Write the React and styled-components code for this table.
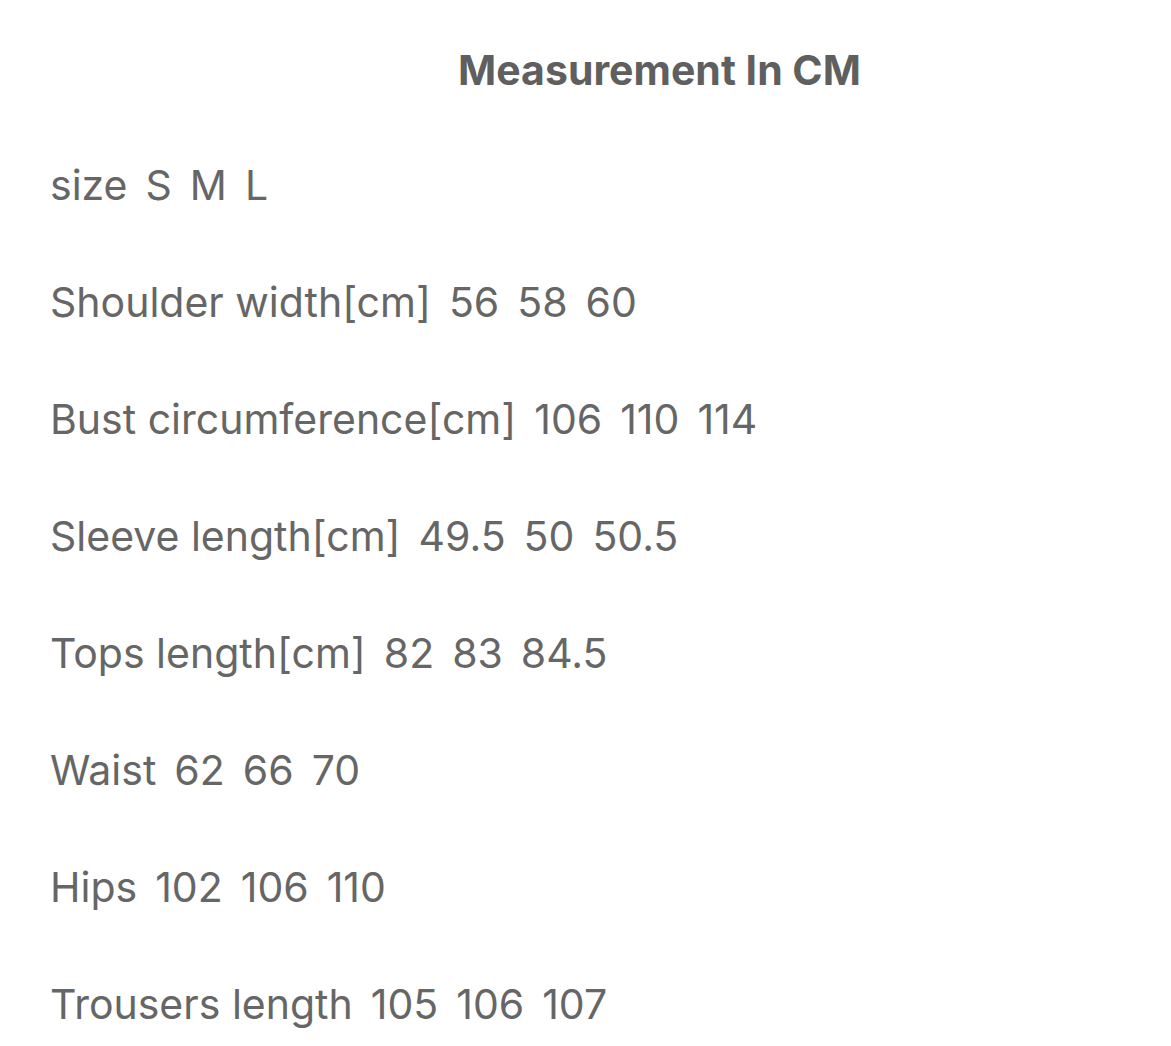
import React from 'react';
import styled, { createGlobalStyle } from 'styled-components';

const Global = createGlobalStyle`
  body {
    margin: 0;
    background: #ffffff;
    font-family: Inter, "Open Sans", sans-serif;
  }
`;

const Page = styled.div`
  display: flex;
  flex-direction: column;
  padding: 40px 0 0 50px;
  width: 1171px;
  height: 1046px;
  box-sizing: border-box;
  overflow: hidden;
`;

const Title = styled.h1`
  flex-shrink: 0;
  margin: 0 0 26px 0;
  padding-left: 98px;
  text-align: center;
  font-size: 41px;
  line-height: 60px;
  font-weight: 700;
  color: #5f5f5f;
`;

const Row = styled.div`
  flex-shrink: 0;
  display: flex;
  align-items: center;
  gap: 18px;
  height: 117px;
  font-size: 41px;
  color: #666666;
`;

const Cell = styled.span`
  white-space: nowrap;
`;

const rows = [
  ['size', 'S', 'M', 'L'],
  ['Shoulder width[cm]', '56', '58', '60'],
  ['Bust circumference[cm]', '106', '110', '114'],
  ['Sleeve length[cm]', '49.5', '50', '50.5'],
  ['Tops length[cm]', '82', '83', '84.5'],
  ['Waist', '62', '66', '70'],
  ['Hips', '102', '106', '110'],
  ['Trousers length', '105', '106', '107'],
];

const App = () => (
  <>
    <Global />
    <Page>
      <Title>Measurement In CM</Title>
      {rows.map((r) => (
        <Row key={r[0]}>
          {r.map((c, i) => <Cell key={i}>{c}</Cell>)}
        </Row>
      ))}
    </Page>
  </>
);

export default App;
